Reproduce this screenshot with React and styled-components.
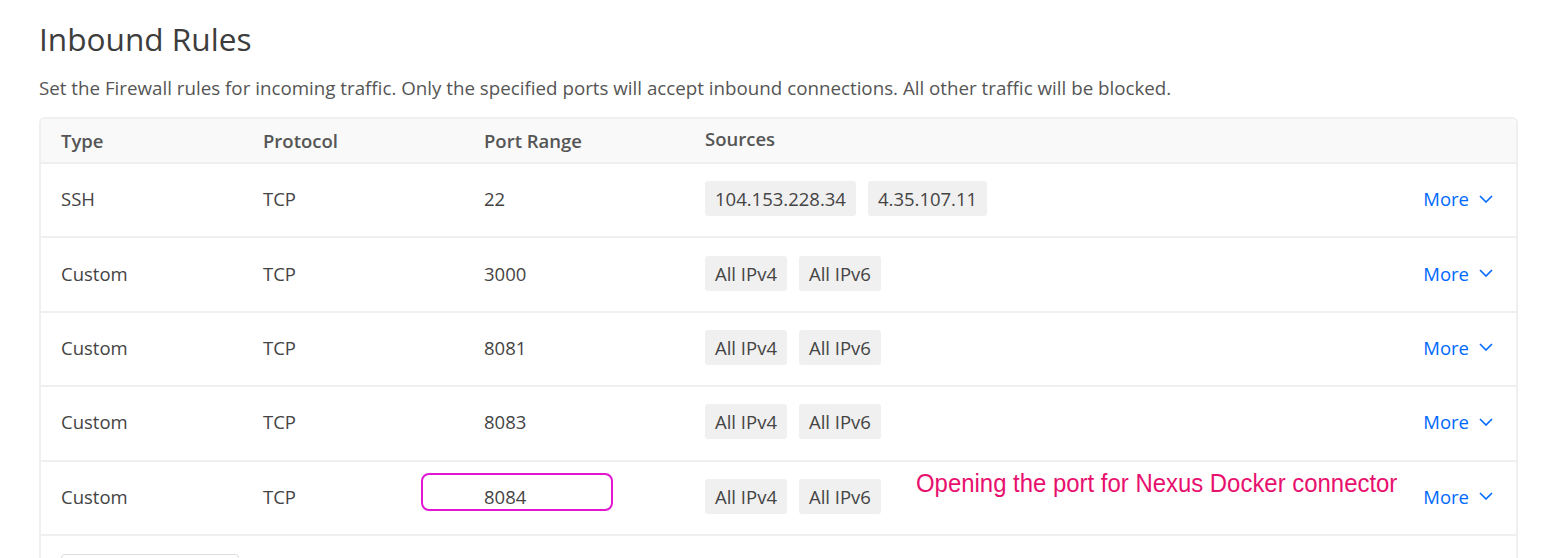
import React from "react";
import styled, { createGlobalStyle } from "styled-components";

const GlobalStyle = createGlobalStyle`
  body {
    margin: 0;
    background: #fff;
    font-family: "Open Sans", Lato, sans-serif;
    color: #444;
  }
`;

const rules = [
  { type: "SSH", protocol: "TCP", port: "22", sources: ["104.153.228.34", "4.35.107.11"] },
  { type: "Custom", protocol: "TCP", port: "3000", sources: ["All IPv4", "All IPv6"] },
  { type: "Custom", protocol: "TCP", port: "8081", sources: ["All IPv4", "All IPv6"] },
  { type: "Custom", protocol: "TCP", port: "8083", sources: ["All IPv4", "All IPv6"] },
  { type: "Custom", protocol: "TCP", port: "8084", sources: ["All IPv4", "All IPv6"], marked: true },
];

const Chevron = () => (
  <svg width="14" height="8" viewBox="0 0 14 8" fill="none">
    <path d="M1 1l6 6 6-6" stroke="#0069ff" strokeWidth="1.6" />
  </svg>
);

const App = () => {
  return (
    <>
      <GlobalStyle />
      <Page>
        <Title>Inbound Rules</Title>
        <Lead>
          Set the Firewall rules for incoming traffic. Only the specified ports will accept
          inbound connections. All other traffic will be blocked.
        </Lead>
        <Table>
          <HeadRow>
            <HeadCell>Type</HeadCell>
            <HeadCell>Protocol</HeadCell>
            <HeadCell>Port Range</HeadCell>
            <HeadCell $raised>Sources</HeadCell>
          </HeadRow>
          {rules.map((r) => (
            <Row key={r.port}>
              <Cell>{r.type}</Cell>
              <Cell>{r.protocol}</Cell>
              <Cell>{r.port}</Cell>
              <Sources>
                {r.sources.map((s) => (
                  <Chip key={s}>{s}</Chip>
                ))}
              </Sources>
              <More>
                More <Chevron />
              </More>
              {r.marked && <PortMark />}
              {r.marked && <Note>Opening the port for Nexus Docker connector</Note>}
            </Row>
          ))}
          <Footer>
            <AddButton />
          </Footer>
        </Table>
      </Page>
    </>
  );
};

const Page = styled.div`
  padding: 20px 36px 0 39px;
  height: 558px;
  overflow: hidden;
  box-sizing: border-box;
`;

const Title = styled.h1`
  margin: 0;
  font-size: 31.6px;
  font-weight: 400;
  line-height: 38px;
  color: #3d3d3d;
`;

const Lead = styled.p`
  margin: 19px 0 0;
  font-size: 18.75px;
  line-height: 22px;
  color: #555;
`;

const Table = styled.div`
  margin-top: 18px;
  border: 2px solid #efefef;
  border-radius: 6px;
  width: 1479px;
  box-sizing: border-box;
`;

const HeadRow = styled.div`
  display: grid;
  grid-template-columns: 202px 221px 221px 1fr;
  height: 43px;
  padding-bottom: 1px;
  box-sizing: border-box;
  align-items: center;
  background: #f9f9f9;
  border-radius: 6px 6px 0 0;
`;

const HeadCell = styled.div`
  padding-left: 20px;
  font-size: 18.5px;
  font-weight: 600;
  color: #555;
  position: relative;
  top: ${(p) => (p.$raised ? "-2px" : "0")};
`;

const Row = styled.div`
  display: grid;
  grid-template-columns: 202px 221px 221px 1fr auto;
  height: 74.4px;
  box-sizing: border-box;
  padding-bottom: 3px;
  align-items: center;
  border-top: 2px solid #efefef;
  position: relative;
`;

const Cell = styled.div`
  padding-left: 20px;
  font-size: 18.5px;
  color: #444;
`;

const Sources = styled.div`
  display: flex;
  align-items: center;
  gap: 12px;
  padding-left: 20px;
`;

const Chip = styled.span`
  background: #f0f0f0;
  border-radius: 3px;
  padding: 0 10px;
  height: 35px;
  display: inline-flex;
  align-items: center;
  font-size: 18.5px;
  color: #444;
`;

const More = styled.div`
  display: flex;
  align-items: center;
  gap: 10px;
  padding-right: 23px;
  font-size: 18.5px;
  color: #0069ff;
`;

const PortMark = styled.span`
  position: absolute;
  left: 380px;
  top: 11px;
  width: 192px;
  height: 38px;
  border: 2px solid #e316d2;
  border-radius: 8px;
  box-sizing: border-box;
`;

const Note = styled.span`
  position: absolute;
  left: 875px;
  top: 6px;
  font-family: "Liberation Sans", Arial, sans-serif;
  font-size: 26px;
  line-height: 30px;
  color: #e8106e;
  white-space: nowrap;
  transform: scaleX(0.92);
  transform-origin: left center;
`;

const Footer = styled.div`
  border-top: 2px solid #efefef;
  padding: 18px 20px 0;
  height: 40px;
`;

const AddButton = styled.div`
  width: 176px;
  height: 36px;
  border: 1px solid #ddd;
  border-radius: 4px;
`;

export default App;
